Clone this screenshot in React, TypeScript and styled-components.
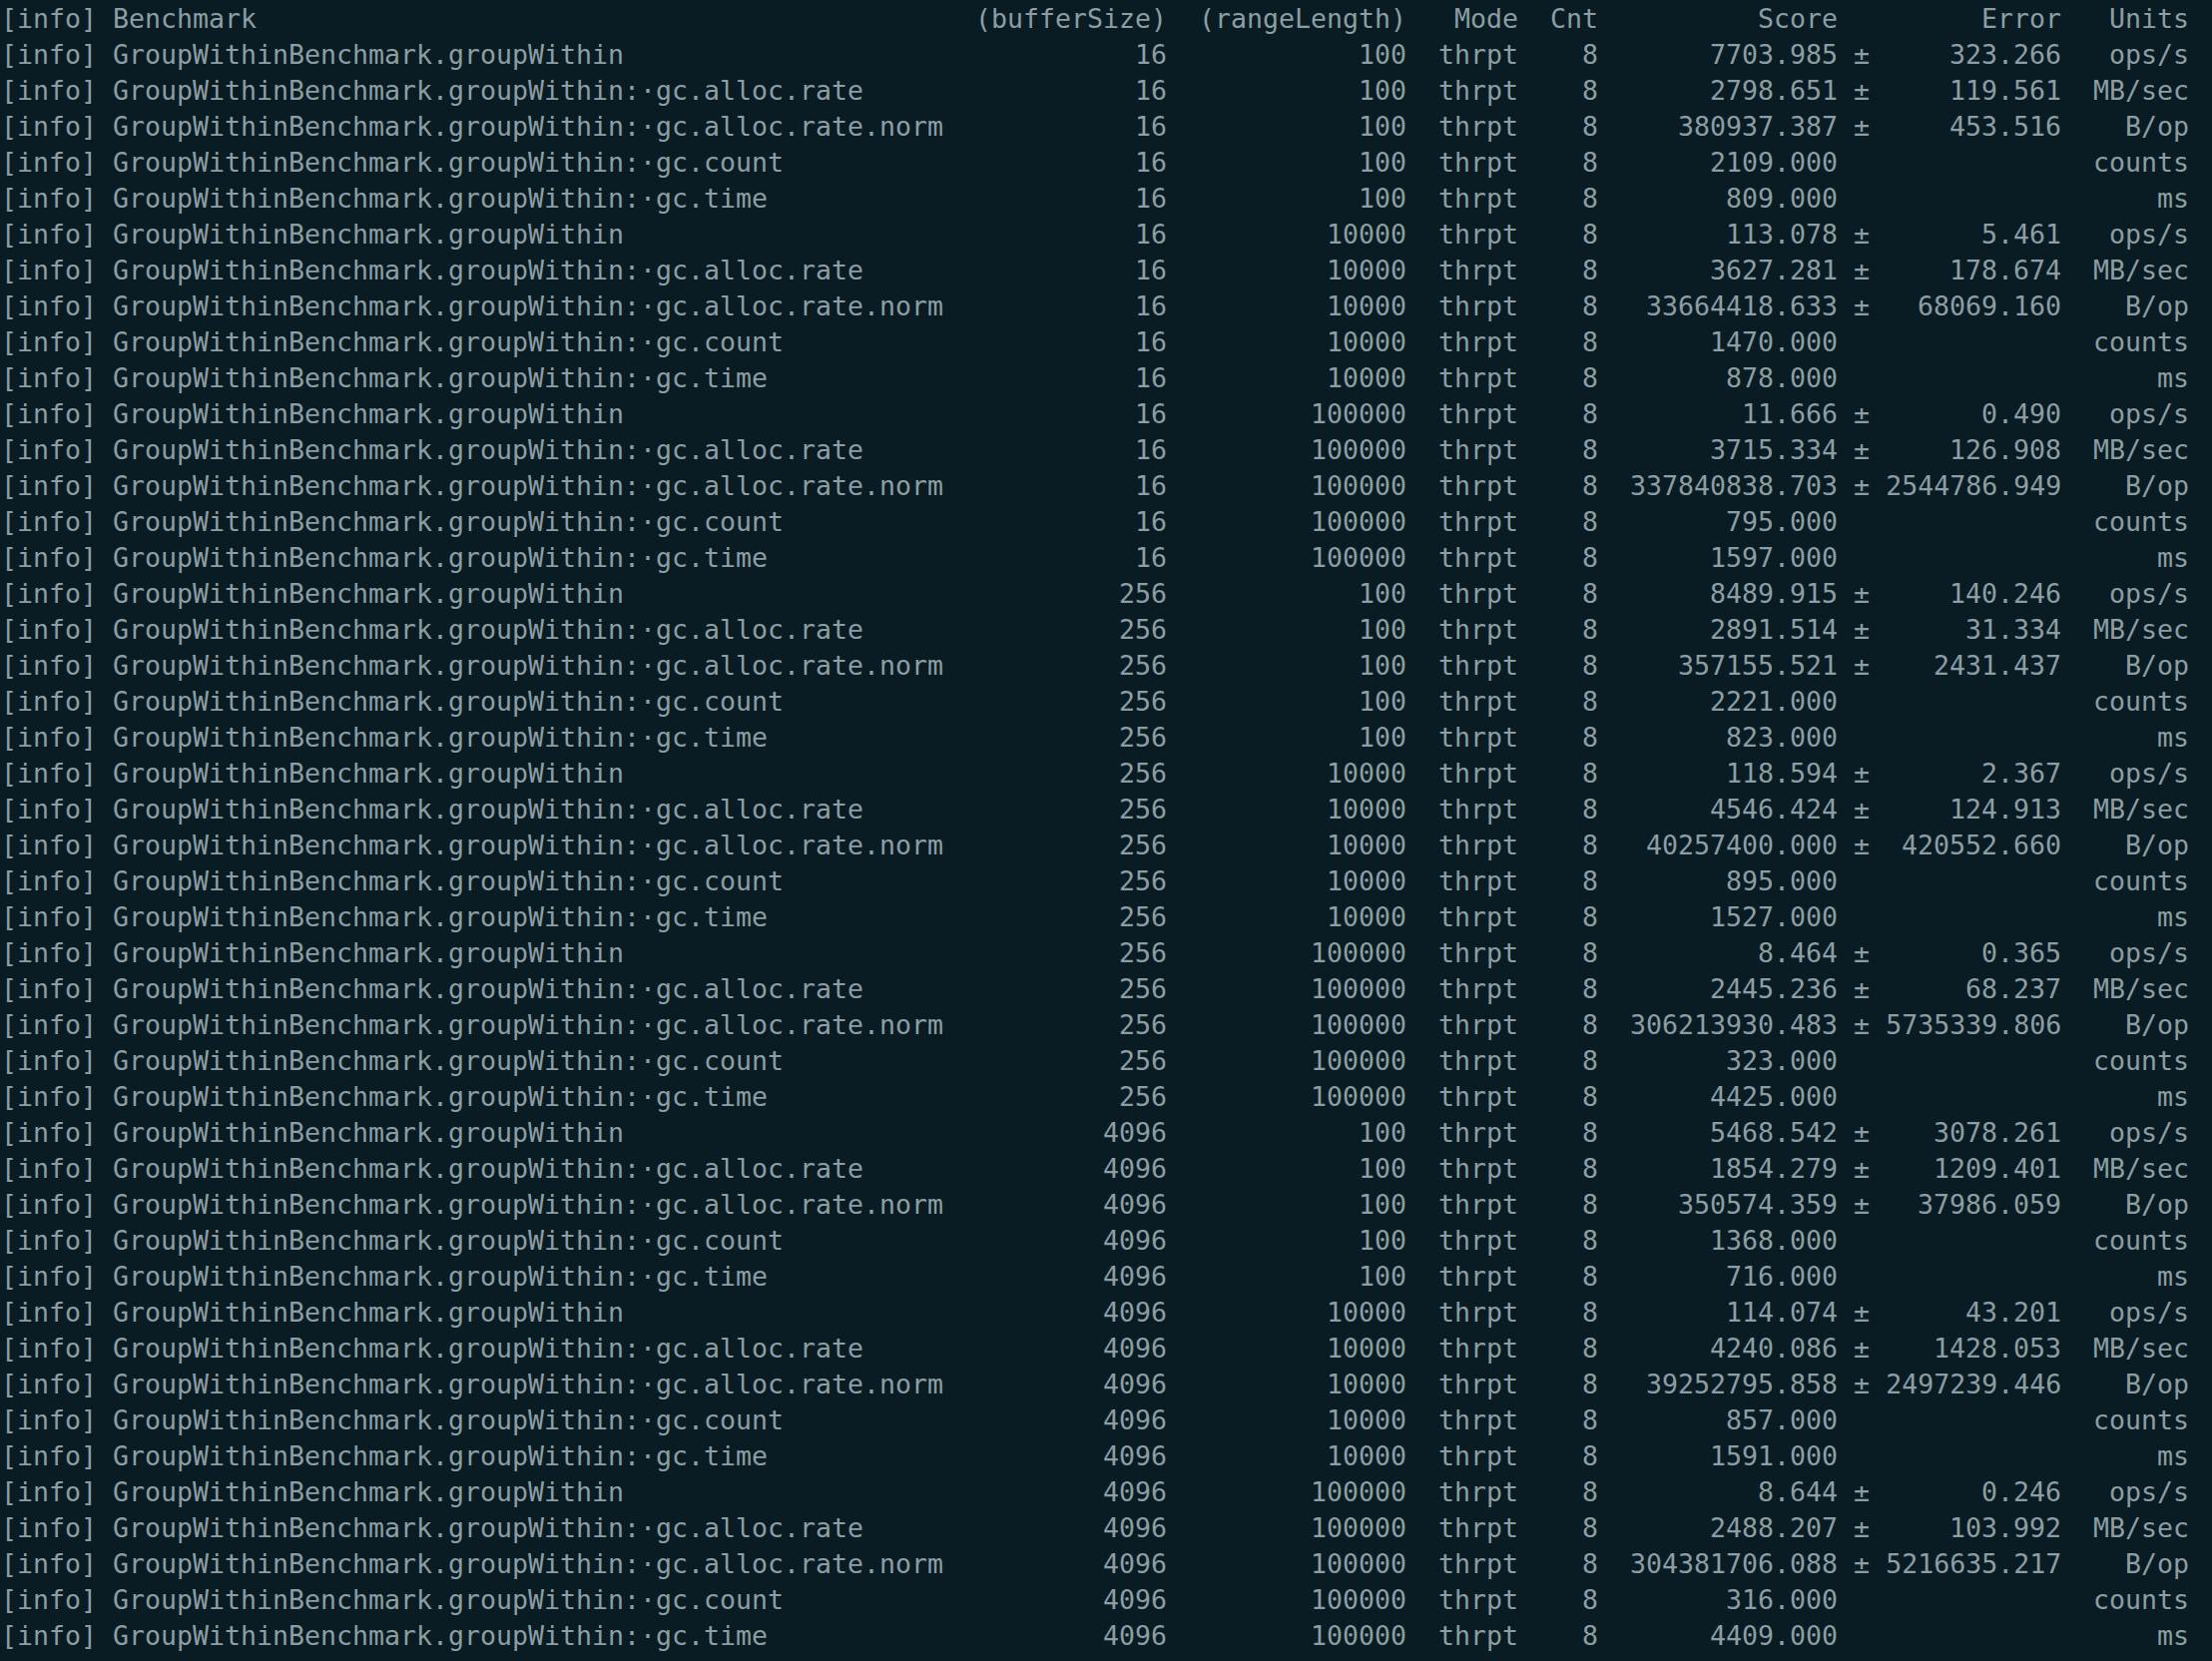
import styled, { createGlobalStyle } from "styled-components";

const GlobalStyle = createGlobalStyle`
  html, body {
    margin: 0;
    padding: 0;
    background-color: #0a1c23;
    overflow: hidden;
  }
`;

const Terminal = styled.div`
  width: 100%;
  min-height: 100vh;
  box-sizing: border-box;
  padding: 1px 0 0 1px;
  background-color: #0a1c23;
  color: #8d9ea2;
  font-family: "DejaVu Sans Mono", "Liberation Mono", monospace;
  font-size: 26.58px;
  line-height: 36px;
  white-space: pre;
`;

const Row = styled.div`
  display: grid;
  grid-template-columns: 59ch 14ch 15ch 7ch 5ch 15ch 3ch 11ch 8ch;
  height: 36px;
`;

const Cell = styled.span<{ $align?: "left" | "right" | "center" }>`
  text-align: ${(p) => p.$align || "right"};
  overflow: visible;
`;

const PlainLine = styled.div`
  height: 36px;
`;

type Metric = [string, string?];

const metricNames = ["", ":·gc.alloc.rate", ":·gc.alloc.rate.norm", ":·gc.count", ":·gc.time"];
const units = ["ops/s", "MB/sec", "B/op", "counts", "ms"];

const groups: { buffer: number; range: number; values: Metric[] }[] = [
  { buffer: 16, range: 100, values: [["7703.985", "323.266"], ["2798.651", "119.561"], ["380937.387", "453.516"], ["2109.000"], ["809.000"]] },
  { buffer: 16, range: 10000, values: [["113.078", "5.461"], ["3627.281", "178.674"], ["33664418.633", "68069.160"], ["1470.000"], ["878.000"]] },
  { buffer: 16, range: 100000, values: [["11.666", "0.490"], ["3715.334", "126.908"], ["337840838.703", "2544786.949"], ["795.000"], ["1597.000"]] },
  { buffer: 256, range: 100, values: [["8489.915", "140.246"], ["2891.514", "31.334"], ["357155.521", "2431.437"], ["2221.000"], ["823.000"]] },
  { buffer: 256, range: 10000, values: [["118.594", "2.367"], ["4546.424", "124.913"], ["40257400.000", "420552.660"], ["895.000"], ["1527.000"]] },
  { buffer: 256, range: 100000, values: [["8.464", "0.365"], ["2445.236", "68.237"], ["306213930.483", "5735339.806"], ["323.000"], ["4425.000"]] },
  { buffer: 4096, range: 100, values: [["5468.542", "3078.261"], ["1854.279", "1209.401"], ["350574.359", "37986.059"], ["1368.000"], ["716.000"]] },
  { buffer: 4096, range: 10000, values: [["114.074", "43.201"], ["4240.086", "1428.053"], ["39252795.858", "2497239.446"], ["857.000"], ["1591.000"]] },
  { buffer: 4096, range: 100000, values: [["8.644", "0.246"], ["2488.207", "103.992"], ["304381706.088", "5216635.217"], ["316.000"], ["4409.000"]] },
];

const rows = groups.flatMap((g) =>
  g.values.map(([score, error], i) => ({
    name: "GroupWithinBenchmark.groupWithin" + metricNames[i],
    buffer: String(g.buffer),
    range: String(g.range),
    score,
    error,
    unit: units[i],
  }))
);

const App = (): JSX.Element => {
  return (
    <>
      <GlobalStyle />
      <Terminal>
        <Row>
          <Cell $align="left">[info] Benchmark</Cell>
          <Cell>(bufferSize)</Cell>
          <Cell>(rangeLength)</Cell>
          <Cell>Mode</Cell>
          <Cell>Cnt</Cell>
          <Cell>Score</Cell>
          <Cell />
          <Cell>Error</Cell>
          <Cell>Units</Cell>
        </Row>
        {rows.map((r, index) => (
          <Row key={index}>
            <Cell $align="left">[info] {r.name}</Cell>
            <Cell>{r.buffer}</Cell>
            <Cell>{r.range}</Cell>
            <Cell>thrpt</Cell>
            <Cell>8</Cell>
            <Cell>{r.score}</Cell>
            <Cell $align="center">{r.error ? "±" : ""}</Cell>
            <Cell>{r.error || ""}</Cell>
            <Cell>{r.unit}</Cell>
          </Row>
        ))}
        <PlainLine>[success] Total time: 872 s (14:32), completed Jul 18, 2020 21:33:12</PlainLine>
      </Terminal>
    </>
  );
};

export default App;
